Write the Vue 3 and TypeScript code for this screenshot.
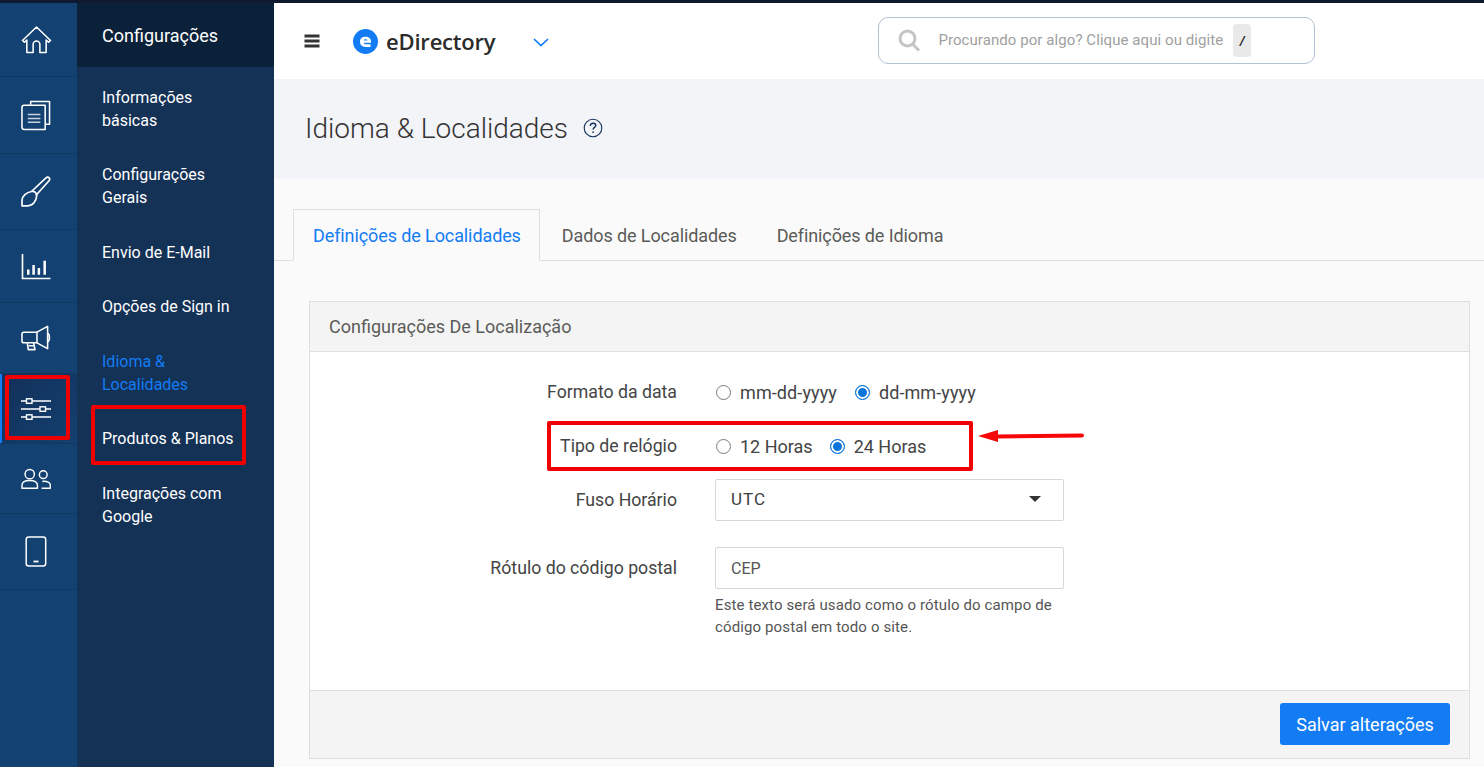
<template>
  <div class="page">
    <aside class="rail">
      <a v-for="item in railItems" :key="item.name" class="rail-item" :class="{ active: item.name === 'settings' }" :style="{ height: item.height + 'px' }">
        <svg v-if="item.name === 'home'" width="31" height="28" viewBox="0 0 32 29" fill="none" stroke="#fff" stroke-width="1.600" stroke-linejoin="round">
          <path d="M1.500 15 16 1l14.500 14-2 1.800-2.500-2.300V27.500h-6.500V19a3.500 3.500 0 0 0-7 0v8.500H6V14.500l-2.500 2.300z" />
        </svg>
        <svg v-else-if="item.name === 'pages'" width="30" height="31" viewBox="0 0 31 32" fill="none" stroke="#fff" stroke-width="1.600" stroke-linejoin="round">
          <path d="M10 5V1.500h19.500V25H25" />
          <path d="M3 5.500h22V30.500H3.500A2.500 2.500 0 0 1 1 28V7.500a2 2 0 0 1 2-2z" />
          <path d="M7 15h13M7 19h13M7 23h13" stroke="#c9d3e0" stroke-width="1.500" />
        </svg>
        <svg v-else-if="item.name === 'design'" width="30" height="31" viewBox="0 0 30 31" fill="none" stroke="#fff" stroke-width="1.700" stroke-linejoin="round">
          <path d="M10.500 15.500 25 1.800c1.500-1.300 3.800-.3 3.700 1.500 0 .6-.3 1.100-.7 1.500L14.800 19.500" />
          <path d="M10.500 15.500c3-.8 5.500 1.500 5.200 4.500-.4 5-4 9.800-8.700 9.800H1V24.500c0-4.500 4.500-8 9.500-9z" />
        </svg>
        <svg v-else-if="item.name === 'stats'" width="30" height="27" viewBox="0 0 31 28" fill="none" stroke="#fff" stroke-width="1.700">
          <path d="M1.500 1v25.500H30.500" />
          <path d="M7.500 17v5.500M13 12.500v10M18.500 15.500v7M24.500 8v14.500" stroke-width="2.600" />
        </svg>
        <svg v-else-if="item.name === 'promote'" width="30" height="26" viewBox="0 0 31 26" fill="none" stroke="#fff" stroke-width="1.600" stroke-linejoin="round">
          <path d="M3 7h13.500v11H3a2 2 0 0 1-2-2V9a2 2 0 0 1 2-2z" />
          <path d="M16.500 7 27.500 1v23l-11-6" />
          <path d="M27.500 8c2.500 1 2.500 8 0 9" />
          <path d="M6.500 18l1 7h7l-1.500-7M8 21h5" />
        </svg>
        <svg v-else-if="item.name === 'settings'" width="30" height="22" viewBox="0 0 30 22" fill="none" stroke="#fff" stroke-width="1.400">
          <path d="M0 3h5.500M11 3h19M0 11h19M24.500 11h5.500M0 19h5.500M11 19h19" />
          <rect x="5.500" y="0.800" width="5.500" height="4.500" />
          <rect x="19" y="8.800" width="5.500" height="4.500" />
          <rect x="5.500" y="16.800" width="5.500" height="4.500" />
        </svg>
        <svg v-else-if="item.name === 'users'" width="30" height="22" viewBox="0 0 31 22" fill="none" stroke="#fff" stroke-width="1.500">
          <circle cx="9" cy="6" r="4.800" />
          <path d="M1 20.500v-3c0-3 3-5 8-5s8 2 8 5v3z" stroke-linejoin="round" />
          <circle cx="23" cy="6.500" r="4" />
          <path d="M22 13.500c5-.5 8.300 1 8.300 4v3h-9" stroke-linejoin="round" />
        </svg>
        <svg v-else width="22" height="31" viewBox="0 0 22 31" fill="none" stroke="#fff" stroke-width="1.500">
          <rect x="1.200" y="1" width="19.500" height="29" rx="2.500" />
          <path d="M8.500 25.500h5" stroke-width="1.800" />
        </svg>
      </a>
    </aside>

    <nav class="subnav">
      <div class="subnav-title">Configurações</div>
      <ul class="subnav-list">
        <li v-for="link in links" :key="link" :class="{ current: link === 'Idioma & Localidades' }">{{ link }}</li>
      </ul>
    </nav>

    <main class="main">
      <header class="topbar">
        <svg class="burger" width="16" height="14" viewBox="0 0 16 14" fill="#333">
          <rect x="0.500" y="0.500" width="15" height="3" />
          <rect x="0.500" y="5.500" width="15" height="3" />
          <rect x="0.500" y="10.500" width="15" height="3" />
        </svg>
        <div class="logo">
          <svg width="25" height="25" viewBox="0 0 25 25">
            <circle cx="12.500" cy="12.500" r="12.500" fill="#137cf5" />
            <path d="M7 12.500c0-3 2-4.800 5.500-4.800 3.300 0 5.500 1.800 5.500 4.700v1.300H10.800c.2 1 .9 1.500 2 1.500h4.700v2.700h-5c-3.400 0-5.500-2-5.500-5.400zm3.800-1h3.600c-.1-.8-.8-1.200-1.800-1.200s-1.600.4-1.800 1.200z" fill="#fff" fill-rule="evenodd" />
          </svg>
          <span class="logo-text">eDirectory</span>
        </div>
        <svg class="chevron" width="16" height="9" viewBox="0 0 16 9" fill="none" stroke="#137cf5" stroke-width="1.700">
          <path d="M1 1l7 6.500L15 1" />
        </svg>
        <div class="search">
          <svg width="22" height="23" viewBox="0 0 22 23" fill="none" stroke="#c4c4c4">
            <circle cx="9.500" cy="9.500" r="7.500" stroke-width="3" />
            <path d="M15 15.500l6 6" stroke-width="3" />
          </svg>
          <span class="search-text">Procurando por algo? Clique aqui ou digite</span>
          <kbd class="search-key">/</kbd>
        </div>
      </header>

      <section class="title-band">
        <h1>Idioma &amp; Localidades</h1>
        <svg width="20" height="20" viewBox="0 0 20 20" fill="none" stroke="#15325a" stroke-width="1.100">
          <circle cx="10" cy="10" r="8.800" />
          <path d="M7.300 8c0-1.800 1.200-2.800 2.800-2.800s2.700 1 2.700 2.300c0 1.800-2.700 2-2.700 4" stroke-width="1.400" />
          <path d="M10.100 13.500v1.500" stroke-width="1.500" />
        </svg>
      </section>

      <section class="content">
        <div class="tabs">
          <a class="tab selected">Definições de Localidades</a>
          <a class="tab">Dados de Localidades</a>
          <a class="tab">Definições de Idioma</a>
        </div>

        <div class="card">
          <div class="card-head">Configurações De Localização</div>
          <div class="card-body">
            <div class="row radio-row">
              <label class="row-label">Formato da data</label>
              <div class="radios wide">
                <span class="radio"><i class="dot"></i>mm-dd-yyyy</span>
                <span class="radio"><i class="dot on"></i>dd-mm-yyyy</span>
              </div>
            </div>
            <div class="row radio-row second">
              <label class="row-label">Tipo de relógio</label>
              <div class="radios">
                <span class="radio"><i class="dot"></i>12 Horas</span>
                <span class="radio"><i class="dot on"></i>24 Horas</span>
              </div>
            </div>
            <div class="row third">
              <label class="row-label">Fuso Horário</label>
              <div class="field select">UTC<i class="caret"></i></div>
            </div>
            <div class="row fourth">
              <label class="row-label">Rótulo do código postal</label>
              <div class="field">CEP</div>
            </div>
            <p class="help">Este texto será usado como o rótulo do campo de código postal em todo o site.</p>
          </div>
          <div class="card-foot">
            <button class="save" type="button">Salvar alterações</button>
          </div>
        </div>
      </section>
    </main>

    <!-- annotations painted on top of the screenshot -->
    <div class="mark mark-rail"></div>
    <div class="mark mark-link"></div>
    <div class="mark mark-clock"></div>
    <svg class="arrow" width="108" height="20" viewBox="0 0 108 20">
      <path d="M0 10 20 4V8.500L104 7.500a2 2 0 0 1 0 4L20 12.500V16z" fill="#f60808" />
    </svg>
  </div>
</template>

<script setup lang="ts">
const railItems = [
  { name: 'home', height: 74 },
  { name: 'pages', height: 77 },
  { name: 'design', height: 76 },
  { name: 'stats', height: 73 },
  { name: 'promote', height: 71 },
  { name: 'settings', height: 70 },
  { name: 'users', height: 70 },
  { name: 'mobile', height: 76 },
]

const links = [
  'Informações básicas',
  'Configurações Gerais',
  'Envio de E-Mail',
  'Opções de Sign in',
  'Idioma & Localidades',
  'Produtos & Planos',
  'Integrações com Google',
]
</script>

<style>
html,
body {
  margin: 0;
  overflow: hidden;
  background: #fafafa;
}
</style>

<style scoped>
.page {
  position: relative;
  display: flex;
  height: 764px;
  border-top: 3px solid #0f1a30;
  overflow: hidden;
  font-family: Roboto, "Liberation Sans", sans-serif;
  color: #3d3d3d;
}

.rail {
  flex: 0 0 77px;
  background: #134172;
}
.rail-item {
  display: flex;
  align-items: center;
  justify-content: center;
  box-sizing: border-box;
  padding-right: 5px;
  border-bottom: 1px solid #11385f;
}
.rail-item.active {
  background: linear-gradient(135deg, #12305a, #14406f);
  box-shadow: inset 2px 0 0 #137cf5;
}

.subnav {
  flex: 0 0 197px;
  background: #143156;
}
.subnav-title {
  height: 64px;
  box-sizing: border-box;
  padding: 21px 0 0 25px;
  background: #0a2139;
  color: #fff;
  font-size: 18px;
  line-height: 23px;
}
.subnav-list {
  list-style: none;
  margin: 0;
  padding: 18.500px 30px 0 25px;
  color: #fff;
  font-size: 16px;
  line-height: 23px;
}
.subnav-list li {
  margin-bottom: 31.500px;
}
.subnav-list li.current {
  color: #137cf5;
}

.main {
  flex: 1;
  min-width: 0;
  display: flex;
  flex-direction: column;
}

.topbar {
  flex: 0 0 76px;
  display: flex;
  align-items: center;
  padding-left: 30px;
  background: #fff;
}
.burger {
  margin-right: 33px;
}
.logo {
  display: flex;
  align-items: center;
  gap: 8px;
}
.logo-text {
  color: #2b2b2b;
  font-family: "Open Sans", sans-serif;
  font-size: 22px;
  font-weight: 600;
  letter-spacing: -0.2px;
}
.chevron {
  margin-left: 38px;
  margin-top: 2px;
}
.search {
  display: flex;
  align-items: center;
  box-sizing: border-box;
  width: 437px;
  height: 47px;
  margin-left: 329px;
  margin-bottom: 2px;
  padding-left: 19px;
  border: 1px solid #b3c2d6;
  border-radius: 10px;
  background: #fff;
}
.search-text {
  margin-left: 18px;
  color: #a0a0a0;
  font-size: 15px;
  letter-spacing: 0.07px;
}
.search-key {
  display: flex;
  align-items: center;
  justify-content: center;
  width: 18px;
  height: 33px;
  margin-left: 10px;
  border-radius: 4px;
  background: #e9e9ea;
  color: #222;
  font-family: Roboto, sans-serif;
  font-size: 13px;
  font-style: italic;
  font-weight: 700;
}

.title-band {
  flex: 0 0 100px;
  box-sizing: border-box;
  display: flex;
  align-items: center;
  gap: 15px;
  padding: 0 0 2px 31px;
  background: #f3f4f8;
}
.title-band h1 {
  margin: 0;
  color: #333;
  font-size: 28px;
  font-weight: 300;
}

.content {
  flex: 1;
  padding-top: 30px;
  background: #fafafa;
}

.tabs {
  display: flex;
  height: 52px;
  box-sizing: border-box;
  padding-left: 19px;
  border-bottom: 1px solid #dfdfdf;
}
.tab {
  height: 52px;
  box-sizing: border-box;
  padding: 15px 20px 0;
  color: #5b5b58;
  font-size: 18px;
  line-height: 23px;
  letter-spacing: -0.1px;
}
.tab.selected {
  padding: 14px 18px 0 19px;
  margin-right: 2px;
  border: 1px solid #dfdfdf;
  border-bottom-color: #fafafa;
  color: #137cf5;
}

.card {
  margin: 40px 14px 0 35px;
  border: 1px solid #dfdfdf;
}
.card-head {
  height: 50px;
  box-sizing: border-box;
  padding: 13px 19px 0;
  border-bottom: 1px solid #dfdfdf;
  background: #f4f4f4;
  color: #5b5b58;
  font-size: 18px;
  line-height: 23px;
}
.card-body {
  height: 338px;
  box-sizing: border-box;
  padding-top: 20px;
  background: #fff;
}

.row {
  display: flex;
  align-items: center;
}
.row-label {
  flex: 0 0 367px;
  box-sizing: border-box;
  margin-right: 38px;
  text-align: right;
  color: #444;
  font-size: 17.700px;
}
.radio-row {
  height: 40px;
}
.radio-row.second {
  margin-top: 14px;
}
.row.third {
  margin-top: 13px;
}
.row.fourth {
  margin-top: 26px;
}

.radios {
  display: flex;
  gap: 17px;
  padding-left: 1px;
}
.radios.wide {
  gap: 18px;
  letter-spacing: 0.1px;
}
.radio {
  display: flex;
  align-items: center;
  gap: 9px;
  color: #444;
  font-size: 18px;
}
.dot {
  box-sizing: border-box;
  width: 15px;
  height: 15px;
  border: 1px solid #7a7a7a;
  border-radius: 50%;
}
.dot.on {
  border-color: #0a74da;
  background: #0a74da;
  box-shadow: inset 0 0 0 2px #fff;
}

.field {
  position: relative;
  box-sizing: border-box;
  width: 349px;
  height: 42px;
  padding: 0 15px;
  border: 1px solid #d8d8d8;
  border-radius: 2px;
  background: #fff;
  color: #555;
  font-size: 16px;
  line-height: 41px;
}
.select {
  color: #3d3d3d;
  font-size: 17px;
  line-height: 39px;
  letter-spacing: 1px;
}
.caret {
  position: absolute;
  top: 16px;
  right: 22px;
  border-left: 6px solid transparent;
  border-right: 6px solid transparent;
  border-top: 6px solid #333;
}
.help {
  width: 349px;
  margin: 5px 0 0 405px;
  color: #555;
  font-size: 15px;
  line-height: 22px;
  letter-spacing: 0.12px;
}

.card-foot {
  display: flex;
  justify-content: flex-end;
  align-items: flex-start;
  height: 68px;
  box-sizing: border-box;
  padding: 12px 19px 0 0;
  border-top: 1px solid #dfdfdf;
  background: #f4f4f4;
}
.save {
  width: 170px;
  height: 42px;
  border: 0;
  border-radius: 3px;
  background: #137cf5;
  color: #fff;
  font-family: Roboto, sans-serif;
  font-size: 18px;
}

.mark {
  position: absolute;
  box-sizing: border-box;
  border: 4px solid #f00000;
  border-radius: 2px;
}
.mark-rail {
  left: 5px;
  top: 372px;
  width: 65px;
  height: 65px;
}
.mark-link {
  left: 91px;
  top: 402px;
  width: 155px;
  height: 60px;
}
.mark-clock {
  left: 547px;
  top: 418px;
  width: 426px;
  height: 50px;
}
.arrow {
  position: absolute;
  left: 978px;
  top: 423px;
}
</style>
